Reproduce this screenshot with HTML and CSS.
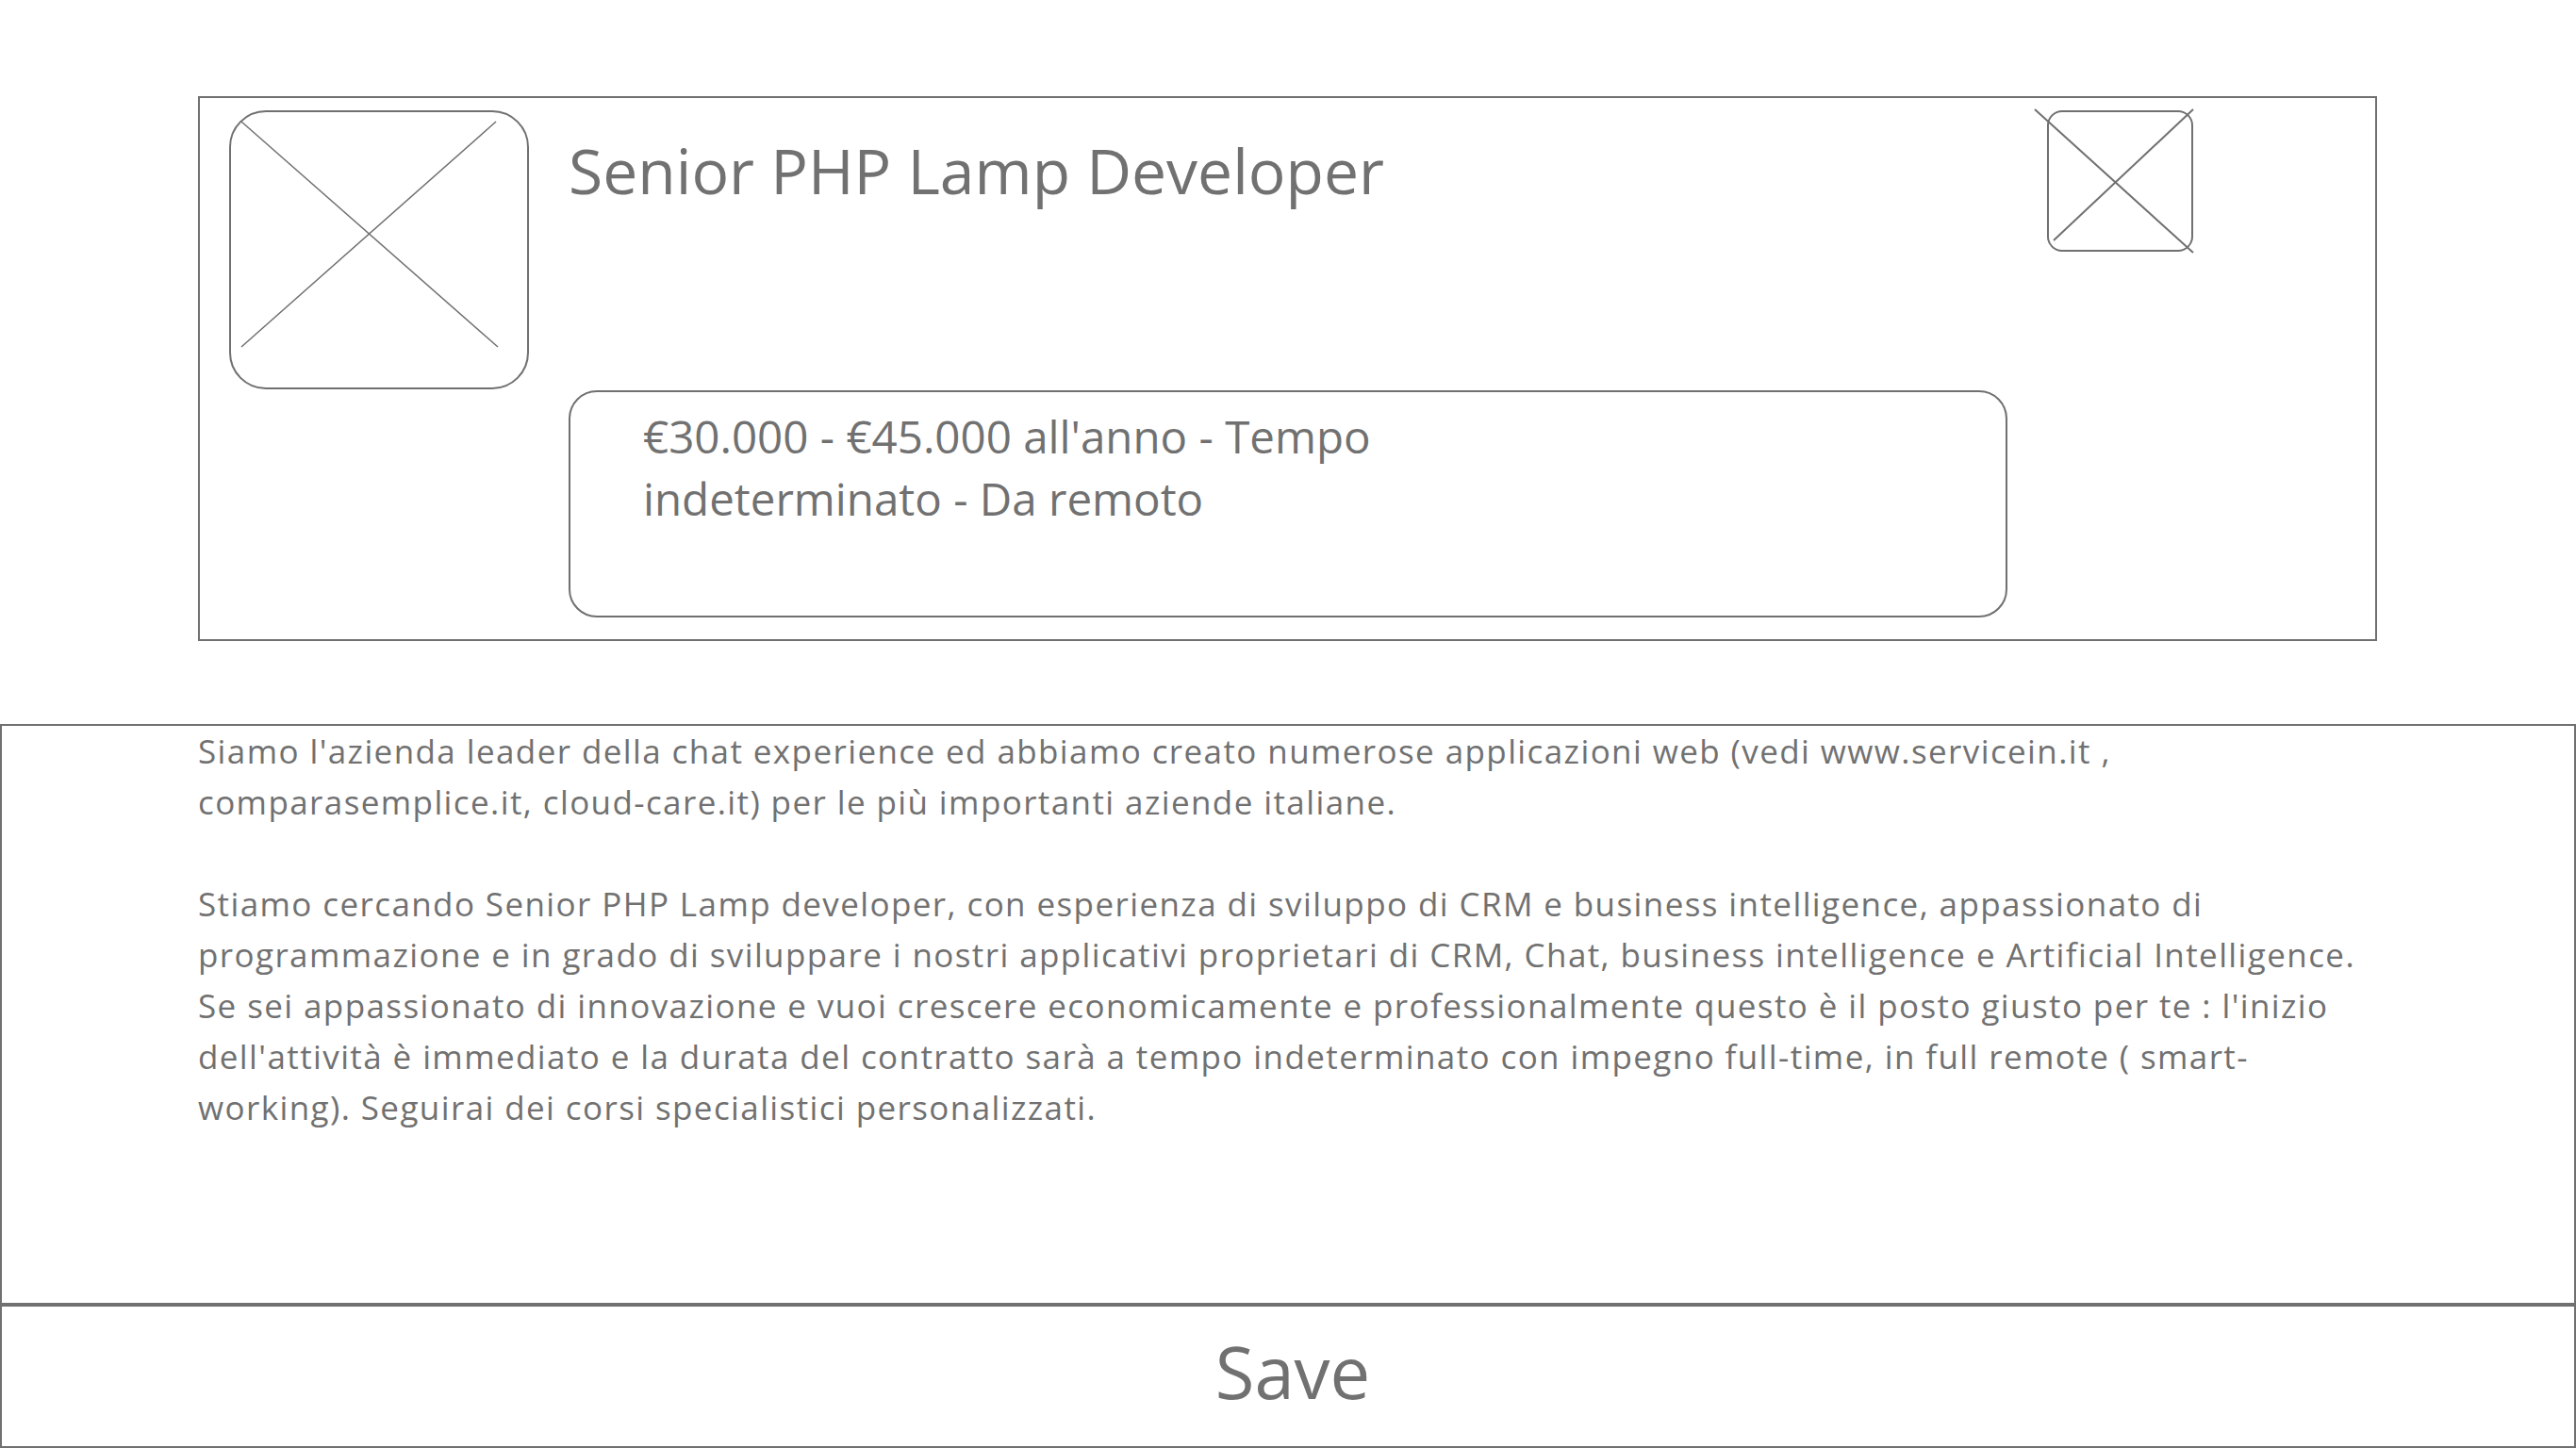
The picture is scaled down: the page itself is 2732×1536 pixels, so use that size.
FILE: index.html
```html
<!DOCTYPE html>
<html lang="it">
<head>
<meta charset="utf-8">
<title>Senior PHP Lamp Developer</title>
<link rel="stylesheet" href="styles.css">
</head>
<body>
  <section class="job-card">
    <div class="logo-ph">
      <svg class="ph-svg" width="318" height="296" viewBox="0 0 318 296">
        <rect x="1" y="1" width="316" height="294" rx="38" ry="38" fill="none" stroke="#707070" stroke-width="2"/>
        <line x1="13" y1="12" x2="285" y2="251" stroke="#707070" stroke-width="1.5"/>
        <line x1="283" y1="12" x2="13" y2="251" stroke="#707070" stroke-width="1.5"/>
      </svg>
    </div>
    <div class="job-main">
      <h1 class="job-title">Senior PHP Lamp Developer</h1>
      <div class="job-meta">
        <p class="job-meta-text">€30.000 - €45.000 all'anno - Tempo indeterminato - Da remoto</p>
      </div>
    </div>
    <div class="icon-ph">
      <svg class="ph-svg" width="155" height="150" viewBox="0 0 155 150">
        <rect x="1" y="1" width="153" height="148" rx="15" ry="15" fill="none" stroke="#707070" stroke-width="2"/>
        <line x1="-13" y1="-1" x2="155" y2="151" stroke="#707070" stroke-width="2"/>
        <line x1="7" y1="138" x2="155" y2="-1" stroke="#707070" stroke-width="2"/>
      </svg>
    </div>
  </section>

  <section class="description">
    <p>Siamo l'azienda leader della chat experience ed abbiamo creato numerose applicazioni web (vedi www.servicein.it , comparasemplice.it, cloud-care.it) per le più importanti aziende italiane.</p>
    <p>Stiamo cercando Senior PHP Lamp developer, con esperienza di sviluppo di CRM e business intelligence, appassionato di programmazione e in grado di sviluppare i nostri applicativi proprietari di CRM, Chat, business intelligence e Artificial Intelligence. Se sei appassionato di innovazione e vuoi crescere economicamente e professionalmente questo è il posto giusto per te : l'inizio dell'attività è immediato e la durata del contratto sarà a tempo indeterminato con impegno full-time, in full remote ( smart-working). Seguirai dei corsi specialistici personalizzati.</p>
  </section>

  <footer class="save-bar">
    <span class="save-label">Save</span>
  </footer>
</body>
</html>
```

FILE: styles.css
```css
* {
  box-sizing: border-box;
}

html, body {
  margin: 0;
  padding: 0;
  background: #ffffff;
}

body {
  width: 2732px;
  height: 1536px;
  overflow: hidden;
  font-family: "Open Sans", "Noto Sans", "DejaVu Sans", sans-serif;
  color: #717171;
}

.job-card {
  margin: 102px 211px 0 210px;
  height: 578px;
  border: 2px solid #707070;
  padding: 13px 193px 0 31px;
  display: flex;
  align-items: flex-start;
  gap: 42px;
}

.logo-ph {
  flex: 0 0 318px;
  height: 296px;
}

.icon-ph {
  flex: 0 0 155px;
  height: 150px;
}

.ph-svg {
  display: block;
  overflow: visible;
}

.job-main {
  flex: 1 1 auto;
  min-width: 0;
  display: flex;
  flex-direction: column;
}

.job-title {
  margin: 23px 0 0 0;
  font-size: 66px;
  line-height: 80px;
  font-weight: 400;
  color: #717171;
}

.job-meta {
  margin-top: 194px;
  height: 241px;
  border: 2px solid #707070;
  border-radius: 30px;
  padding: 14px 0 0 77px;
}

.job-meta-text {
  margin: 0;
  max-width: 900px;
  font-size: 47.5px;
  line-height: 66px;
}

.description {
  margin-top: 88px;
  height: 616px;
  border: 2px solid #707070;
  padding: 0 222px 0 208px;
  font-size: 35px;
  letter-spacing: 1.4px;
  line-height: 54px;
}

.description p {
  margin: 0 0 54px 0;
}

.save-bar {
  height: 152px;
  border: 2px solid #707070;
  display: flex;
  align-items: center;
  justify-content: center;
  padding: 0 0 10px 10px;
}

.save-label {
  font-size: 76px;
  line-height: 1;
  color: #717171;
}
```
